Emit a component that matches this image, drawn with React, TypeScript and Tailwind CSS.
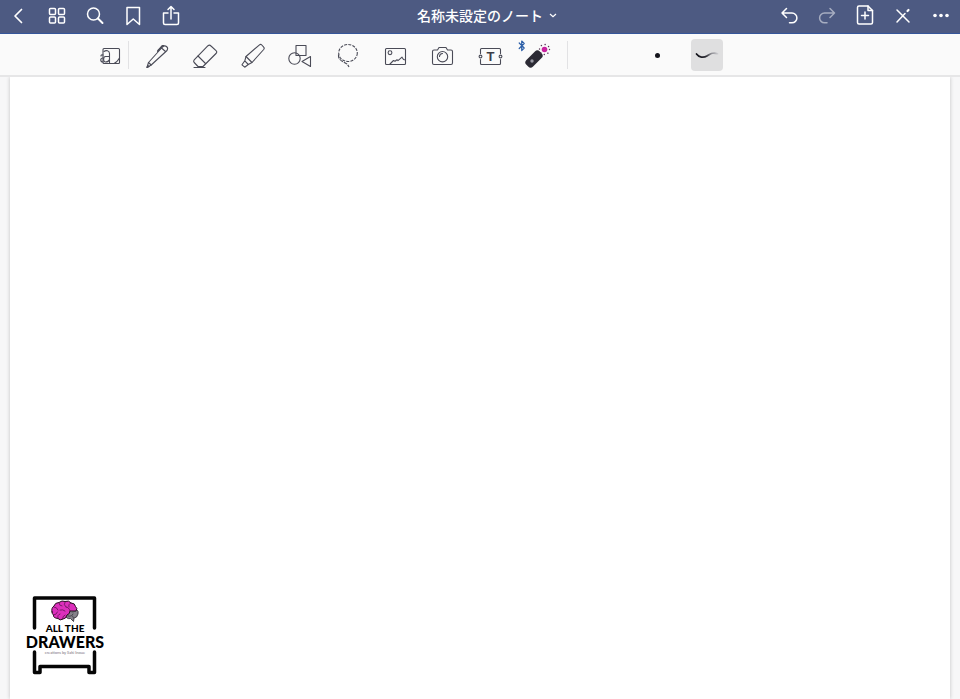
import type { ReactNode } from "react";

interface Tool {
  label: string;
  icon: ReactNode;
}

function HeaderIcon({ children }: { children: ReactNode }) {
  return (
    <svg
      viewBox="0 0 24 24"
      className="h-6 w-6"
      fill="none"
      stroke="currentColor"
      strokeWidth="1.5"
      strokeLinecap="round"
      strokeLinejoin="round"
      aria-hidden="true"
    >
      {children}
    </svg>
  );
}

function ToolIcon({ children }: { children: ReactNode }) {
  return (
    <svg
      viewBox="0 0 28 28"
      className="h-7 w-7 overflow-visible"
      fill="none"
      stroke="#4a4b57"
      strokeWidth="1.1"
      strokeLinecap="round"
      strokeLinejoin="round"
      aria-hidden="true"
    >
      {children}
    </svg>
  );
}

const leftActions: Tool[] = [
  { label: "戻る", icon: <path d="M14.500 5.500 8 12l6.500 6.500" strokeWidth="1.700" /> },
  {
    label: "サムネイル",
    icon: (
      <>
        <rect x="4.500" y="4.500" width="6" height="6" rx="1" />
        <rect x="13.500" y="4.500" width="6" height="6" rx="1" />
        <rect x="4.500" y="13" width="6" height="6" rx="1" />
        <rect x="13.500" y="13" width="6" height="6" rx="1" />
      </>
    ),
  },
  {
    label: "検索",
    icon: (
      <>
        <circle cx="10.500" cy="10" r="6" />
        <path d="m15 14.500 4.500 4.500" strokeWidth="2" />
      </>
    ),
  },
  { label: "ブックマーク", icon: <path d="M6 3.500h12.500v17L12.250 15 6 20.500z" /> },
  {
    label: "共有",
    icon: (
      <>
        <path d="M9 9H4.500v10a1.500 1.500 0 0 0 1.500 1.500h12a1.500 1.500 0 0 0 1.500-1.500V9H15" />
        <path d="M12 15V2.500M9 5.500l3-3 3 3" />
      </>
    ),
  },
];

const rightActions: Tool[] = [
  { label: "元に戻す", icon: <path d="M9.500 4.500 5 9l4.500 4.500M5 9h10a4.900 4.900 0 0 1 0 9.800H12.500" /> },
  {
    label: "やり直す",
    icon: <path opacity=".5" d="M15 4.500 19.500 9 15 13.500M19.500 9h-10a4.900 4.900 0 0 0 0 9.800H12" />,
  },
  {
    label: "ページを追加",
    icon: (
      <>
        <path d="M15 2H6a1.500 1.500 0 0 0-1.500 1.500v15A1.500 1.500 0 0 0 6 20h12a1.500 1.500 0 0 0 1.500-1.500v-12z" />
        <path d="M15 2v4.500h4.500M12 8v7M8.500 11.500h7" />
      </>
    ),
  },
  {
    label: "閲覧モード",
    icon: (
      <>
        <path d="m6 6 12 12M6 18l8-8.500" />
        <path d="m16.500 7 1-1" strokeWidth="2.200" />
      </>
    ),
  },
  {
    label: "その他",
    icon: (
      <g fill="currentColor" stroke="none">
        <circle cx="6" cy="11.500" r="1.800" />
        <circle cx="12" cy="11.500" r="1.800" />
        <circle cx="18" cy="11.500" r="1.800" />
      </g>
    ),
  },
];

const tools: Tool[] = [
  {
    label: "ペン",
    icon: (
      <>
        <path d="m4 26.500 1.500-5L19.500 6q2-2 4-.500t.500 4L8.200 24z" />
        <path d="m5.500 21.500 2.700 2.500M18.500 7l4 3.500M14.500 10.500l4.500-5.500 1.800-.500" />
        <path d="M15 9.500 19.500 4.800" strokeWidth="1.600" />
        <path d="m4 26.500.700-2.200 1.500 1.300z" fill="#4a4b57" />
      </>
    ),
  },
  {
    label: "消しゴム",
    icon: (
      <>
        <path d="M18 4.700q1.500-1.200 3 .300l5 4.700q1.500 1.300 0 2.800L13 25.500H8L4.200 21.500q-1.200-1.300 0-2.600z" />
        <path d="m8 15 7.500 7.500M4 26.500h11" />
      </>
    ),
  },
  {
    label: "蛍光ペン",
    icon: (
      <>
        <path d="M8 15.500 21.500 3.800q1.200-1 2.300.200l1.900 2.200q1 1.100 0 2.300L14 21.500z" />
        <path d="m8 15.500-1.200 4.300 3.500 3.700 3.700-2M6.800 19.800 4 23.800l2.700 2.400 3.600-2.700" />
      </>
    ),
  },
  {
    label: "図形",
    icon: (
      <>
        <rect x="11" y="4.500" width="10" height="10" />
        <circle cx="9.500" cy="17.500" r="5.700" />
        <path d="m17 20.500 8.500-5v10z" />
      </>
    ),
  },
  {
    label: "投げなわ",
    icon: (
      <>
        <ellipse cx="15" cy="12" rx="9.300" ry="8.500" strokeDasharray="3 1.200" strokeLinecap="butt" />
        <path d="M5.500 13.500c-.500 4 2 6 5 7.500 2.500 1 4 2 5.500 5" strokeDasharray="4 1" strokeLinecap="butt" />
      </>
    ),
  },
  {
    label: "画像",
    icon: (
      <>
        <rect x="4.500" y="7.500" width="20" height="16" rx="1" />
        <circle cx="9" cy="11.700" r="1.900" />
        <path d="m9 23 3.500-3.500 1.500.700 2-1.500 1 1 4-3.500 1.500 2.300 2 .500" />
      </>
    ),
  },
  {
    label: "カメラ",
    icon: (
      <>
        <path d="M6 9h3.500l1.500-2.500h7L19.500 9H23a1.500 1.500 0 0 1 1.500 1.500V22a1.500 1.500 0 0 1-1.500 1.500H6A1.500 1.500 0 0 1 4.500 22V10.500A1.500 1.500 0 0 1 6 9z" />
        <circle cx="14.500" cy="15.700" r="5.200" />
        <path d="M11.500 15.500a3.200 3.200 0 0 1 3-3" />
      </>
    ),
  },
  {
    label: "テキスト",
    icon: (
      <>
        <path d="M4.500 12.500v-4a1 1 0 0 1 1-1h18a1 1 0 0 1 1 1v4M4.500 18.500v4a1 1 0 0 0 1 1h18a1 1 0 0 0 1-1v-4" />
        <circle cx="4.500" cy="15.500" r="1.400" />
        <circle cx="24.500" cy="15.500" r="1.400" />
        <text
          x="14.500"
          y="20"
          textAnchor="middle"
          className="font-['Liberation_Sans'] text-[13px] font-bold"
          fill="#3c3d48"
          stroke="none"
        >
          T
        </text>
      </>
    ),
  },
  {
    label: "レーザーポインター",
    icon: (
      <>
        <path d="m-3.800 2 5 5-2.500 2.500V0l2.500 2.500-5 5" stroke="#2c5fa8" strokeWidth="1.200" />
        <rect x="1.500" y="13.300" width="19" height="9.400" rx="3.500" fill="#2b2a34" stroke="none" transform="rotate(-45 11 18)" />
        <circle cx="9" cy="20" r="1.700" fill="#9a9aa5" stroke="none" />
        <circle cx="21.500" cy="8.500" r="2.800" fill="#c9229f" stroke="none" />
        <circle cx="21.500" cy="8.500" r="5" stroke="#5a3a58" strokeWidth="1.400" strokeDasharray="0.100 3.827" />
      </>
    ),
  },
];

function ActionBar({ actions }: { actions: Tool[] }) {
  return (
    <div className="flex">
      {actions.map((action) => (
        <button
          key={action.label}
          type="button"
          aria-label={action.label}
          className="flex h-8 w-[38px] items-center justify-center"
        >
          <HeaderIcon>{action.icon}</HeaderIcon>
        </button>
      ))}
    </div>
  );
}

function Brain() {
  return (
    <svg viewBox="0 0 28 22" className="h-[22px] w-7" strokeLinejoin="round" strokeLinecap="round" aria-hidden="true">
      <path
        d="M14 15q4 0 5-5 3-3 6-1 3 2 2 5-1 4-4 4l-.500 3.500-3-3q-4 1-5.500-3.500z"
        fill="#85828a"
        stroke="#3b3840"
        strokeWidth=".9"
      />
      <path
        d="M1 12q-1-4 2-6 1-3.500 5-3.500Q11 0 14 1.500q4-1.500 6 1.500 4 0 4.500 3.500 2.500 2 .500 4.500-3 0-6 0 0 3-3 4-1 4-4 4-3 2-5-.500Q2 18 2.500 15 1 14 1 12z"
        fill="#dc2fbc"
        stroke="#26101f"
        strokeWidth="1"
      />
      <path
        d="M3 7q3 0 4 3M8 3q0 3 3 3M14 2q-2 3 1 5M20 3q-3 1-2 4M2.500 15q3 0 4-3M7 18q-1-3 2-4M9 10q3-1 5 1M15 7q3 0 4 4M11.500 19q0-3 2.500-4"
        fill="none"
        stroke="#5c1650"
        strokeWidth=".8"
      />
      <path d="M17 16q4 1 5-2M21 12q2 0 4-1M22.500 18l-1-2" fill="none" stroke="#3b3840" strokeWidth=".8" />
    </svg>
  );
}

function DrawersLogo() {
  return (
    <div className="relative flex h-20 w-20 flex-col items-center font-['Lato',sans-serif] text-black">
      <svg
        viewBox="0 0 80 80"
        className="absolute inset-0 h-20 w-20"
        fill="none"
        stroke="#050505"
        strokeWidth="3.500"
        strokeLinejoin="round"
        strokeLinecap="round"
        aria-hidden="true"
      >
        <path d="M9.500 33V3h60v30M9.500 57v20.500h5.500v-6h49v6h5.500V57" />
      </svg>
      <div className="relative mt-[5px]">
        <Brain />
      </div>
      <p className="relative text-[10px] leading-[12px] font-black">ALL THE</p>
      <p className="relative text-[16px] leading-[16px] font-black">DRAWERS</p>
      <p className="relative text-[4px] leading-[5px] text-[#77727c]">creations by Saki Inoue</p>
    </div>
  );
}

export default function App() {
  return (
    <div className="flex min-h-screen flex-col bg-[#f7f7f8] font-['Inter','Noto_Sans_CJK_JP',sans-serif]">
      <header className="flex h-[34px] items-start justify-between border-b border-[#35569a] bg-[#4d5a82] text-white">
        <ActionBar actions={leftActions} />
        <h1 className="pl-[14px]">
          <button type="button" className="flex h-[30px] items-center gap-[6px] text-[14px] font-medium">
            名称未設定のノート
            <svg viewBox="0 0 8 8" className="h-2 w-2" fill="none" stroke="currentColor" strokeWidth="1.200" aria-hidden="true">
              <path d="M1 3l3 2.800L7 3" />
            </svg>
          </button>
        </h1>
        <ActionBar actions={rightActions} />
      </header>

      <nav
        className="relative z-10 flex h-[43px] items-center border-b-2 border-[#e6e6e7] bg-[#fafafa] pt-px pl-[91px]"
        aria-label="ツール"
      >
        <button type="button" aria-label="拡大ウィンドウ" className="flex w-[37px] justify-center">
          <ToolIcon>
            <rect x="7" y="7.500" width="16.500" height="15" rx="1" />
            <path d="M18 22.500c1.500-.500 4-3 5.500-5.500" />
            <path d="M8 10.500c2-1.500 5.500-1 5.500 2v10M13.500 15.500H9.500c-2.500 0-2.500 5.500 0 5.500q3 0 4-2.500" />
            <path d="M7 14q-2-.500-2 1M7 17c-3 0-3 4 0 4" />
          </ToolIcon>
        </button>
        <div className="h-7 w-px bg-[#e2e2e4]" />
        <div className="ml-1 grid w-[428px] grid-cols-9">
          {tools.map((tool) => (
            <button key={tool.label} type="button" aria-label={tool.label} className="flex justify-center">
              <ToolIcon>{tool.icon}</ToolIcon>
            </button>
          ))}
        </div>
        <div className="ml-[6px] h-7 w-px bg-[#e2e2e4]" />
        {/* Stroke options */}
        <button type="button" aria-label="太さ" className="ml-[73px] flex h-8 w-8 items-center justify-center">
          <span className="h-[5px] w-[5px] rounded-full bg-[#14141c]" />
        </button>
        <button
          type="button"
          aria-label="線のスタイル"
          className="ml-[18px] flex h-8 w-8 items-center justify-center rounded bg-[#dfdfe0]"
        >
          <svg viewBox="0 0 24 10" className="h-[10px] w-6" aria-hidden="true">
            <defs>
              <linearGradient id="ink" x1="0" x2="1">
                <stop offset="0" stopColor="#111118" />
                <stop offset=".45" stopColor="#2c2c34" />
                <stop offset=".7" stopColor="#8a8a90" />
                <stop offset="1" stopColor="#c8c8cc" />
              </linearGradient>
            </defs>
            <path
              d="M1.500 4C4 7.500 8.500 8 12 6s5-4 10.500-2.300"
              fill="none"
              stroke="url(#ink)"
              strokeWidth="1.700"
              strokeLinecap="round"
            />
          </svg>
        </button>
      </nav>

      <main className="mx-[10px] flex flex-1 items-end bg-white pb-6 pl-[15px] shadow-[0_0_4px_rgba(0,0,0,0.22)]">
        <DrawersLogo />
      </main>
    </div>
  );
}
